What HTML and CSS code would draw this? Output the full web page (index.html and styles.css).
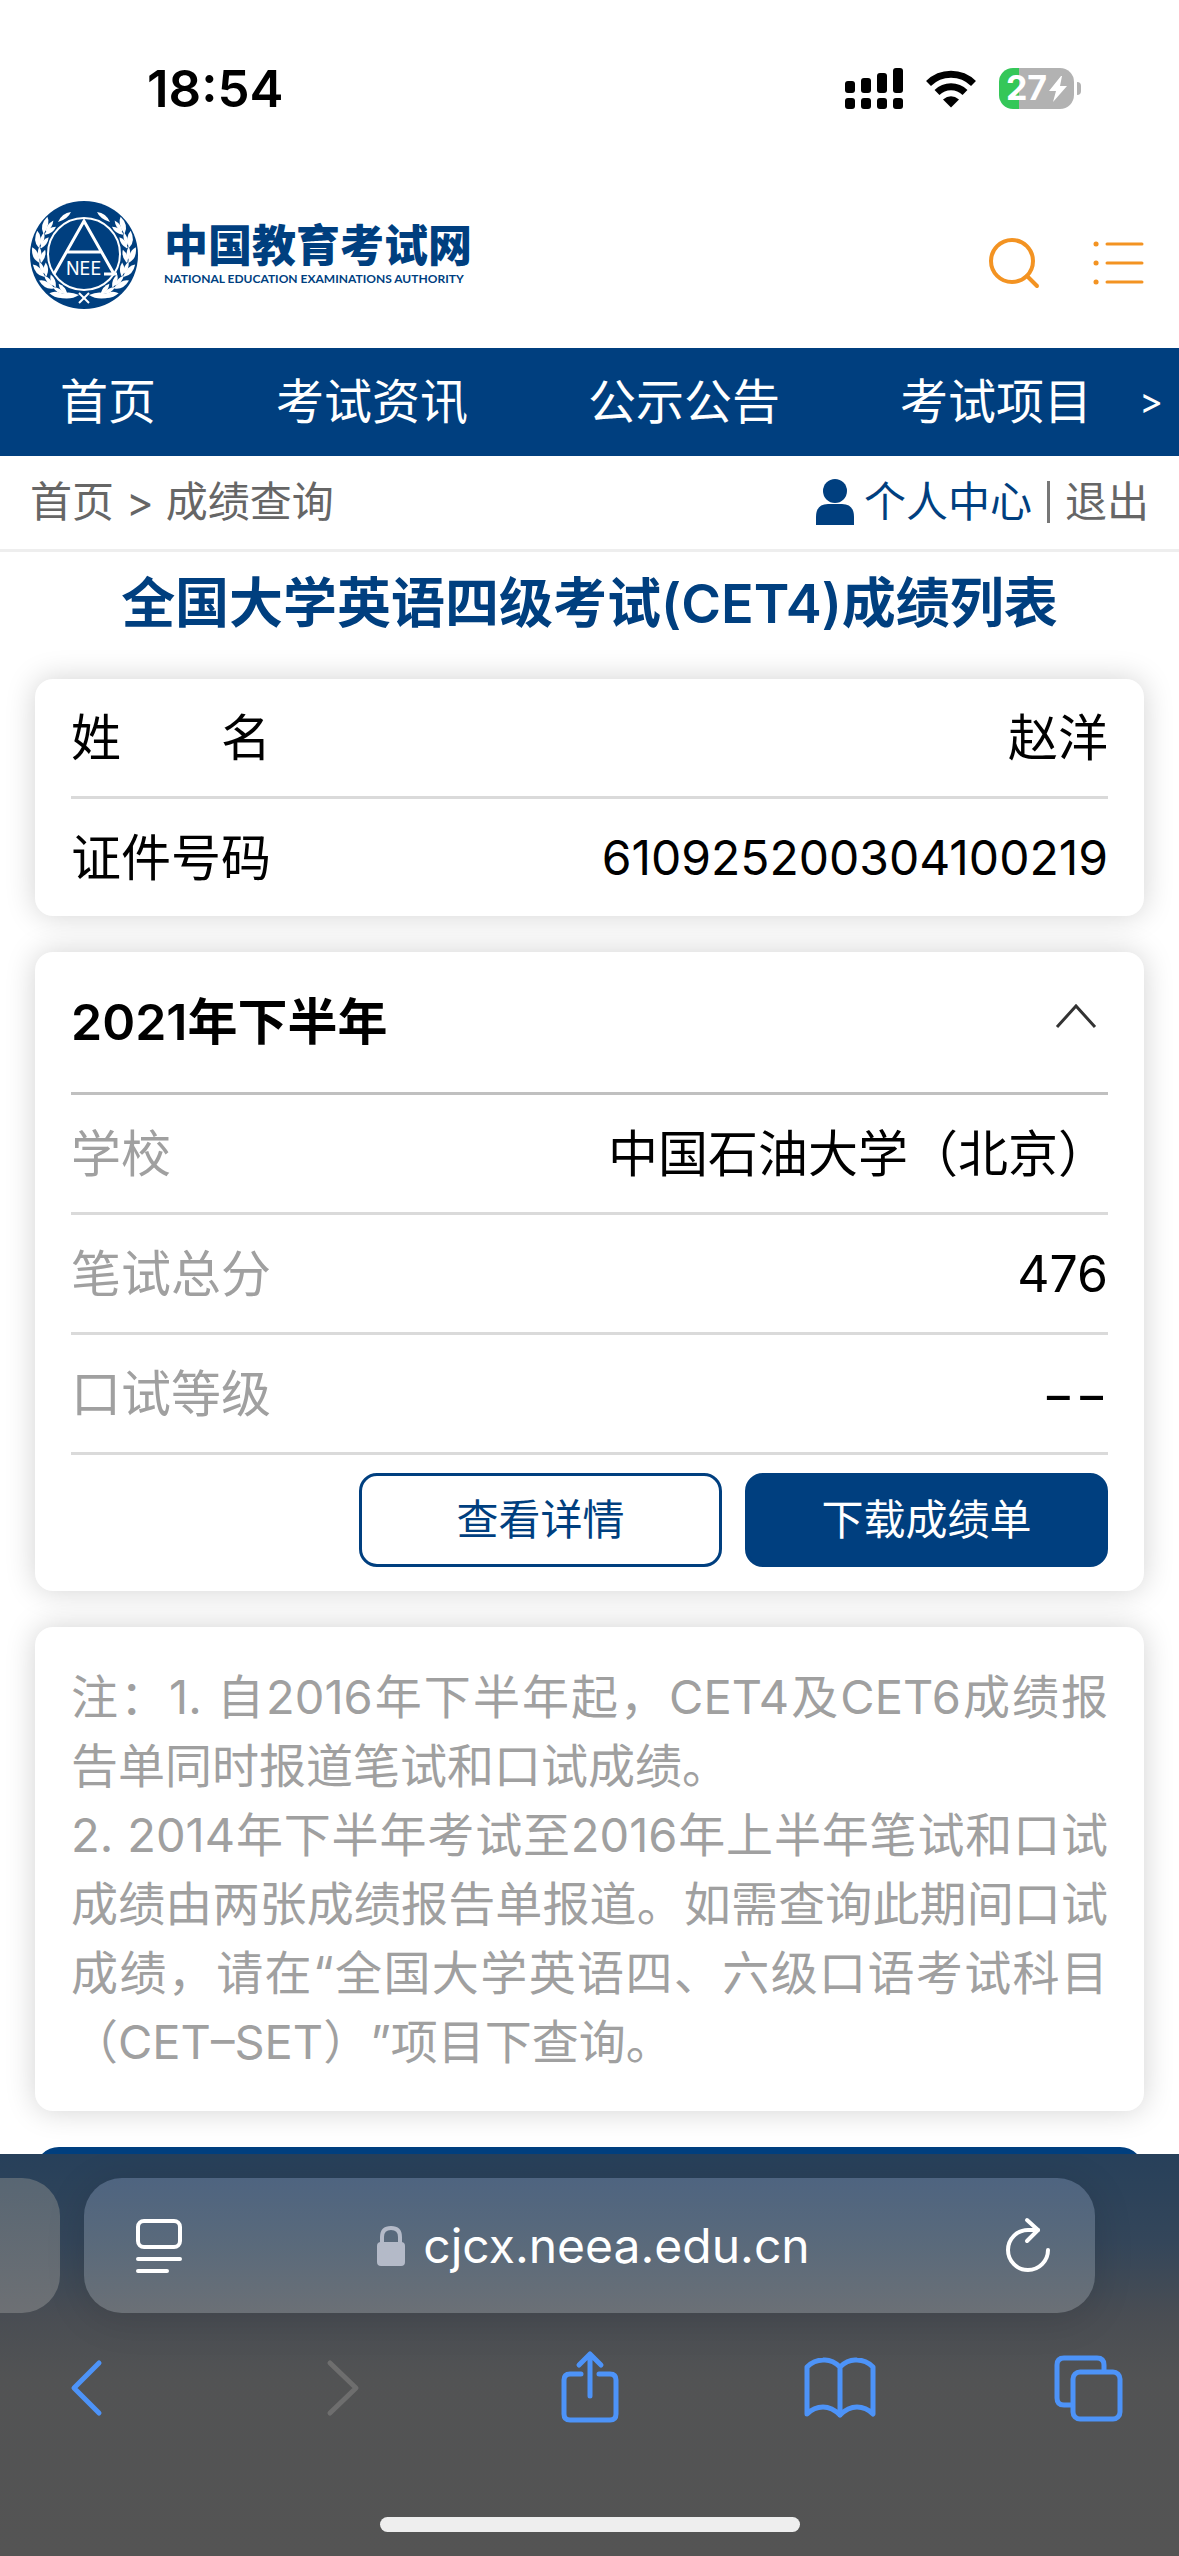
FILE: index.html
```html
<!DOCTYPE html>
<html lang="zh-CN">
<head>
    <meta charset="UTF-8">
    <meta name="viewport" content="width=device-width, initial-scale=1">
    <title>全国大学英语四级考试(CET4)成绩列表</title>
    <link rel="stylesheet" href="styles.css">
</head>
<body>
<div class="screen">
    <div class="status-bar">
        <span class="clock">18:54</span>
        <div class="status-icons">
            <svg width="58" height="42" viewBox="0 0 58 42">
                <rect x="0" y="13" width="10" height="12" rx="3"/>
                <rect x="16" y="10" width="10" height="15" rx="3"/>
                <rect x="32" y="5" width="10" height="20" rx="3"/>
                <rect x="48" y="0" width="10" height="25" rx="3"/>
                <rect x="0" y="30" width="10" height="11" rx="3"/>
                <rect x="16" y="30" width="10" height="11" rx="3"/>
                <rect x="32" y="30" width="10" height="11" rx="3"/>
                <rect x="48" y="30" width="10" height="11" rx="3"/>
            </svg>
            <svg width="52" height="42" viewBox="0 0 52 42">
                <path d="M3.500 15.500A32 32 0 0 1 48.500 15.500" fill="none" stroke="#000" stroke-width="7"/>
                <path d="M12 24.500A20 20 0 0 1 40 24.500" fill="none" stroke="#000" stroke-width="7"/>
                <path d="M18 31.500Q26 25 34 31.500L26 39.500Z"/>
            </svg>
            <div class="battery">
                <div class="battery-body">
                    <span>27</span>
                    <svg width="18" height="26" viewBox="0 0 18 26"><path d="M12 0L0 15H7L4 26L18 10H11L13 0Z" fill="#fff"/></svg>
                </div>
                <div class="battery-tip"></div>
            </div>
        </div>
    </div>

    <div class="page">
        <header class="site-header">
            <a class="logo" href="#">
                <svg class="crest" width="108" height="108" viewBox="10 11 108 108">
                    <defs>
                        <g id="leaf">
                            <path d="M54 19Q58 11 69 12Q66 19 54 20Z"/>
                            <path d="M54 21Q62 19 67 25Q60 27 54 22Z"/>
                            <path d="M57 20Q62 16 70 19Q64 23 57 21Z"/>
                        </g>
                        <g id="branch">
                            <path d="M38 32Q42 23 51 22Q48 29 38 32Z"/>
                            <use href="#leaf" transform="rotate(-50 64 64)"/>
                            <use href="#leaf" transform="rotate(-69 64 64)"/>
                            <use href="#leaf" transform="rotate(-88 64 64)"/>
                            <use href="#leaf" transform="rotate(-107 64 64)"/>
                            <use href="#leaf" transform="rotate(-126 64 64)"/>
                            <use href="#leaf" transform="rotate(-144 64 64)"/>
                            <path d="M37 107Q46 99 59 105Q50 111 37 107Z"/>
                            <path d="M59 103L69 113" fill="none" stroke="#fff" stroke-width="2"/>
                        </g>
                    </defs>
                    <circle cx="64" cy="65" r="54" fill="#003f7f"/>
                    <g fill="#fff">
                        <use href="#branch"/>
                        <use href="#branch" transform="matrix(-1 0 0 1 128 0)"/>
                    </g>
                    <circle cx="64" cy="64" r="36" fill="#003f7f" stroke="#fff" stroke-width="2"/>
                    <path d="M34 84L64 31L94 84M47 62H81M84 84H97" fill="none" stroke="#fff" stroke-width="3"/>
                    <text class="crest-text" x="46" y="85">NEE</text>
                </svg>
                <span class="logo-text">
                    <strong>中国教育考试网</strong>
                    <small>NATIONAL EDUCATION EXAMINATIONS AUTHORITY</small>
                </span>
            </a>
            <div class="header-actions">
                <button type="button" aria-label="搜索">
                    <svg width="52" height="52" viewBox="0 0 52 52" fill="none" stroke="#f39322" stroke-width="4" stroke-linecap="round">
                        <circle cx="24" cy="24" r="21"/>
                        <path d="M39 39L49 49"/>
                    </svg>
                </button>
                <button type="button" aria-label="菜单">
                    <svg width="52" height="52" viewBox="0 0 52 52" fill="none" stroke="#f39322" stroke-width="3" stroke-linecap="round">
                        <path d="M15 7H50M15 26H50M15 45H50"/>
                        <path d="M4 7H4.100M4 26H4.100M4 45H4.100" stroke-width="5"/>
                    </svg>
                </button>
            </div>
        </header>

        <nav class="main-nav">
            <div class="nav-links">
                <a href="#">首页</a>
                <a href="#">考试资讯</a>
                <a href="#">公示公告</a>
                <a href="#">考试项目</a>
            </div>
            <button type="button" class="nav-more" aria-label="更多">&gt;</button>
        </nav>

        <div class="crumbs">
            <div class="path"><a href="#">首页</a><span>&gt;</span><a href="#">成绩查询</a></div>
            <div class="account">
                <svg width="38" height="46" viewBox="0 0 38 46" fill="#003f7f">
                    <ellipse cx="19" cy="12" rx="12" ry="12"/>
                    <path d="M0 46V38Q0 25 12 25H26Q38 25 38 38V46Z"/>
                </svg>
                <a class="user-center" href="#">个人中心</a>
                <i class="divider"></i>
                <a href="#">退出</a>
            </div>
        </div>

        <main>
            <h1>全国大学英语四级考试(CET4)成绩列表</h1>

            <section class="card">
                <dl class="rows person">
                    <div><dt>姓&emsp;&emsp;名</dt><dd>赵洋</dd></div>
                    <div><dt>证件号码</dt><dd class="id-number">610925200304100219</dd></div>
                </dl>
            </section>

            <section class="card">
                <div class="term">
                    <h2>2021年下半年</h2>
                    <button type="button" aria-label="收起">
                        <svg width="40" height="38" viewBox="0 0 40 38" fill="none" stroke="#333" stroke-width="3"><path d="M1 24L20 3L39 24"/></svg>
                    </button>
                </div>
                <dl class="rows score">
                    <div><dt>学校</dt><dd>中国石油大学（北京）</dd></div>
                    <div><dt>笔试总分</dt><dd>476</dd></div>
                    <div><dt>口试等级</dt><dd>−−</dd></div>
                </dl>
                <div class="actions">
                    <button type="button" class="btn">查看详情</button>
                    <button type="button" class="btn btn-primary">下载成绩单</button>
                </div>
            </section>

            <section class="card notes">
                <p>注：1. 自2016年下半年起，CET4及CET6成绩报告单同时报道笔试和口试成绩。</p>
                <p>2. 2014年下半年考试至2016年上半年笔试和口试成绩由两张成绩报告单报道。如需查询此期间口试成绩，请在“全国大学英语四、六级口语考试科目（CET–SET）”项目下查询。</p>
            </section>

            <button type="button" class="back-btn" aria-label="返回"></button>
        </main>
    </div>

    <footer class="browser-bar">
        <div class="tabs">
            <div class="tab-prev"></div>
            <div class="address">
                <button type="button" aria-label="页面设置">
                    <svg width="46" height="54" viewBox="0 0 46 54" fill="none" stroke="#fff" stroke-width="4" stroke-linecap="round">
                        <rect x="2" y="2" width="42" height="26" rx="6"/>
                        <path d="M2 40H44M2 52H31"/>
                    </svg>
                </button>
                <button type="button" class="url">
                    <svg width="28" height="40" viewBox="0 0 28 40">
                        <path d="M5 18V11Q5 2 14 2Q23 2 23 11V18" fill="none" stroke="#b4bac8" stroke-width="4"/>
                        <rect x="0" y="16" width="28" height="24" rx="4" fill="#b4bac8"/>
                    </svg>
                    <span>cjcx.neea.edu.cn</span>
                </button>
                <button type="button" aria-label="刷新">
                    <svg width="46" height="56" viewBox="0 0 46 56" fill="none" stroke="#fff" stroke-width="4" stroke-linecap="round" stroke-linejoin="round">
                        <path d="M43 32A20 20 0 1 1 23 12H33"/>
                        <path d="M22 2L33 12L22 23"/>
                    </svg>
                </button>
            </div>
        </div>
        <div class="tools">
            <button type="button" aria-label="后退">
                <svg width="72" height="72" viewBox="0 0 72 72"><path d="M29 12L4 37L29 62"/></svg>
            </button>
            <button type="button" class="disabled" aria-label="前进" disabled>
                <svg width="72" height="72" viewBox="0 0 72 72"><path d="M15 12L41 37L15 62"/></svg>
            </button>
            <button type="button" aria-label="共享">
                <svg width="72" height="72" viewBox="7 0 72 72"><path d="M27 23H16Q10 23 10 29V63Q10 69 16 69H56Q62 69 62 63V29Q62 23 56 23H45M36 45V3M25 14L36 3L47 14"/></svg>
            </button>
            <button type="button" aria-label="书签">
                <svg width="72" height="72" viewBox="2 0 72 72"><path d="M36 16Q28 8 19 9Q10 9 3 16V63Q10 56 19 56Q28 56 36 64Q44 56 53 56Q62 56 69 63V16Q62 9 53 9Q44 8 36 16V64"/></svg>
            </button>
            <button type="button" aria-label="标签页">
                <svg width="72" height="72" viewBox="0 0 72 72"><rect x="22" y="21" width="47" height="47" rx="7"/><path d="M21 54H13Q6 54 6 47V14Q6 7 13 7H46Q53 7 53 14V20"/></svg>
            </button>
        </div>
        <div class="home-indicator"></div>
    </footer>
</div>
</body>
</html>
```
FILE: styles.css
```css
:root {
    --blue: #003f7f;
    --grey: #a0a0a0;
    --text: #666;
    --link: #4d93f8;
}

* {
    box-sizing: border-box;
}

body {
    margin: 0;
    font-family: Inter, "Noto Sans CJK SC", sans-serif;
    line-height: 1.2;
    text-spacing-trim: space-all;
    background-color: #fff;
    color: #000;
}

a {
    color: inherit;
    text-decoration: none;
}

button {
    padding: 0;
    border: none;
    background: none;
    font: inherit;
    color: inherit;
    cursor: pointer;
}

svg {
    display: block;
    flex: none;
    overflow: visible;
}

h1, h2, p, dl, dd {
    margin: 0;
}

.screen {
    display: flex;
    flex-direction: column;
    height: 100vh;
}

.page {
    flex: 1;
    min-height: 0;
    overflow: hidden;
}

/* Status bar */
.status-bar {
    display: flex;
    justify-content: space-between;
    align-items: center;
    height: 177px;
    padding: 0 98px 0 147px;
}

.clock {
    font-size: 51px;
    font-weight: 600;
}

.status-icons {
    display: flex;
    align-items: center;
    gap: 22px;
}

.battery {
    display: flex;
    align-items: center;
    gap: 3px;
}

.battery-body {
    display: flex;
    align-items: center;
    justify-content: center;
    gap: 2px;
    width: 75px;
    height: 41px;
    border-radius: 14px;
    background: linear-gradient(to right, #35c759 27%, #b2b2b2 27%);
    color: #fff;
    font-size: 34px;
    font-weight: 700;
}

.battery-tip {
    width: 4px;
    height: 13px;
    border-radius: 0 6px 6px 0;
    background-color: #b2b2b2;
}

/* Header */
.site-header {
    display: flex;
    justify-content: space-between;
    align-items: center;
    height: 171px;
    padding: 0 35px 0 30px;
}

.logo {
    display: flex;
    align-items: center;
    gap: 26px;
    padding-bottom: 16px;
    color: var(--blue);
}

.crest-text {
    font-size: 18px;
    fill: #fff;
}

.logo-text {
    display: flex;
    flex-direction: column;
}

.logo-text strong {
    font-size: 44px;
    font-weight: 900;
    line-height: 48px;
}

.logo-text small {
    font-family: Lato, sans-serif;
    font-size: 12px;
    font-weight: 700;
    line-height: 18px;
}

.header-actions {
    display: flex;
    gap: 52px;
}

.main-nav {
    display: flex;
    justify-content: space-between;
    align-items: center;
    height: 108px;
    padding: 0 16px 0 60px;
    background-color: var(--blue);
    color: #fff;
    font-size: 48px;
    white-space: nowrap;
}

.nav-links {
    display: flex;
    gap: 120px;
}

.nav-more {
    font-size: 36px;
}

.crumbs {
    display: flex;
    justify-content: space-between;
    align-items: center;
    height: 96px;
    padding: 0 30px;
    border-bottom: 3px solid #eee;
    color: var(--text);
    font-size: 42px;
}

.path {
    display: flex;
    gap: 12px;
}

.account {
    display: flex;
    align-items: center;
    gap: 10px;
}

.user-center {
    color: var(--blue);
}

.divider {
    width: 3px;
    height: 42px;
    margin: 0 5px;
    background-color: #777;
}

/* Cards */
main {
    display: flex;
    flex-direction: column;
    gap: 36px;
    padding: 0 35px;
}

h1 {
    margin-bottom: -12px;
    color: var(--blue);
    font-size: 54px;
    font-weight: 600;
    line-height: 103px;
    text-align: center;
}

.card {
    padding: 0 36px;
    border-radius: 18px;
    background-color: #fff;
    box-shadow: 0 0 30px rgba(0, 0, 0, 0.18);
}

.rows {
    font-size: 50px;
}

.rows div {
    display: flex;
    justify-content: space-between;
    align-items: center;
    height: 120px;
    border-bottom: 3px solid #dadada;
}

.person div:last-child {
    height: 117px;
    border-bottom: none;
}

.id-number {
    font-size: 48px;
}

.score dt {
    color: var(--grey);
}

.term {
    display: flex;
    justify-content: space-between;
    align-items: center;
    height: 143px;
    padding-right: 12px;
    border-bottom: 3px solid #c0c0c0;
}

h2 {
    font-size: 50px;
    font-weight: 600;
}

.actions {
    display: flex;
    justify-content: flex-end;
    gap: 23px;
    padding: 18px 0 24px;
}

.btn {
    width: 35%;
    height: 94px;
    border: 3px solid var(--blue);
    border-radius: 18px;
    color: var(--blue);
    font-size: 42px;
}

.btn-primary {
    background-color: var(--blue);
    color: #fff;
}

.notes {
    padding: 35px 36px;
    color: var(--grey);
    font-size: 47px;
    line-height: 69px;
    text-align: justify;
}

.back-btn {
    flex: none;
    height: 108px;
    border-radius: 24px;
    background-color: var(--blue);
}

/* Browser bar */
.browser-bar {
    padding-top: 24px;
    background: linear-gradient(#27405a, #34465a 22%, #494d53 40%, #525354 56%, #545454);
    overflow: hidden;
}

.tabs {
    display: flex;
    gap: 24px;
    padding-right: 84px;
}

.tab-prev {
    width: 60px;
    border-radius: 0 38px 38px 0;
    background: linear-gradient(#586673, #6d7074);
}

.address {
    display: flex;
    flex: 1;
    justify-content: space-between;
    align-items: center;
    height: 135px;
    padding: 0 44px 0 52px;
    border-radius: 38px;
    background: linear-gradient(#4e6480, #5a6a7b 50%, #6b7076);
    box-shadow: 0 6px 40px rgba(0, 0, 0, 0.12);
    color: #fff;
    font-size: 48px;
}

.url {
    display: flex;
    align-items: center;
    gap: 18px;
}

.tools {
    display: flex;
    justify-content: space-between;
    padding: 38px 56px 0 70px;
}

.tools svg {
    fill: none;
    stroke: var(--link);
    stroke-width: 5;
    stroke-linecap: round;
    stroke-linejoin: round;
}

.tools .disabled svg {
    stroke: #6e6e6e;
}

.home-indicator {
    width: 420px;
    height: 15px;
    margin: 94px auto 24px;
    border-radius: 8px;
    background-color: #eee;
}
```
